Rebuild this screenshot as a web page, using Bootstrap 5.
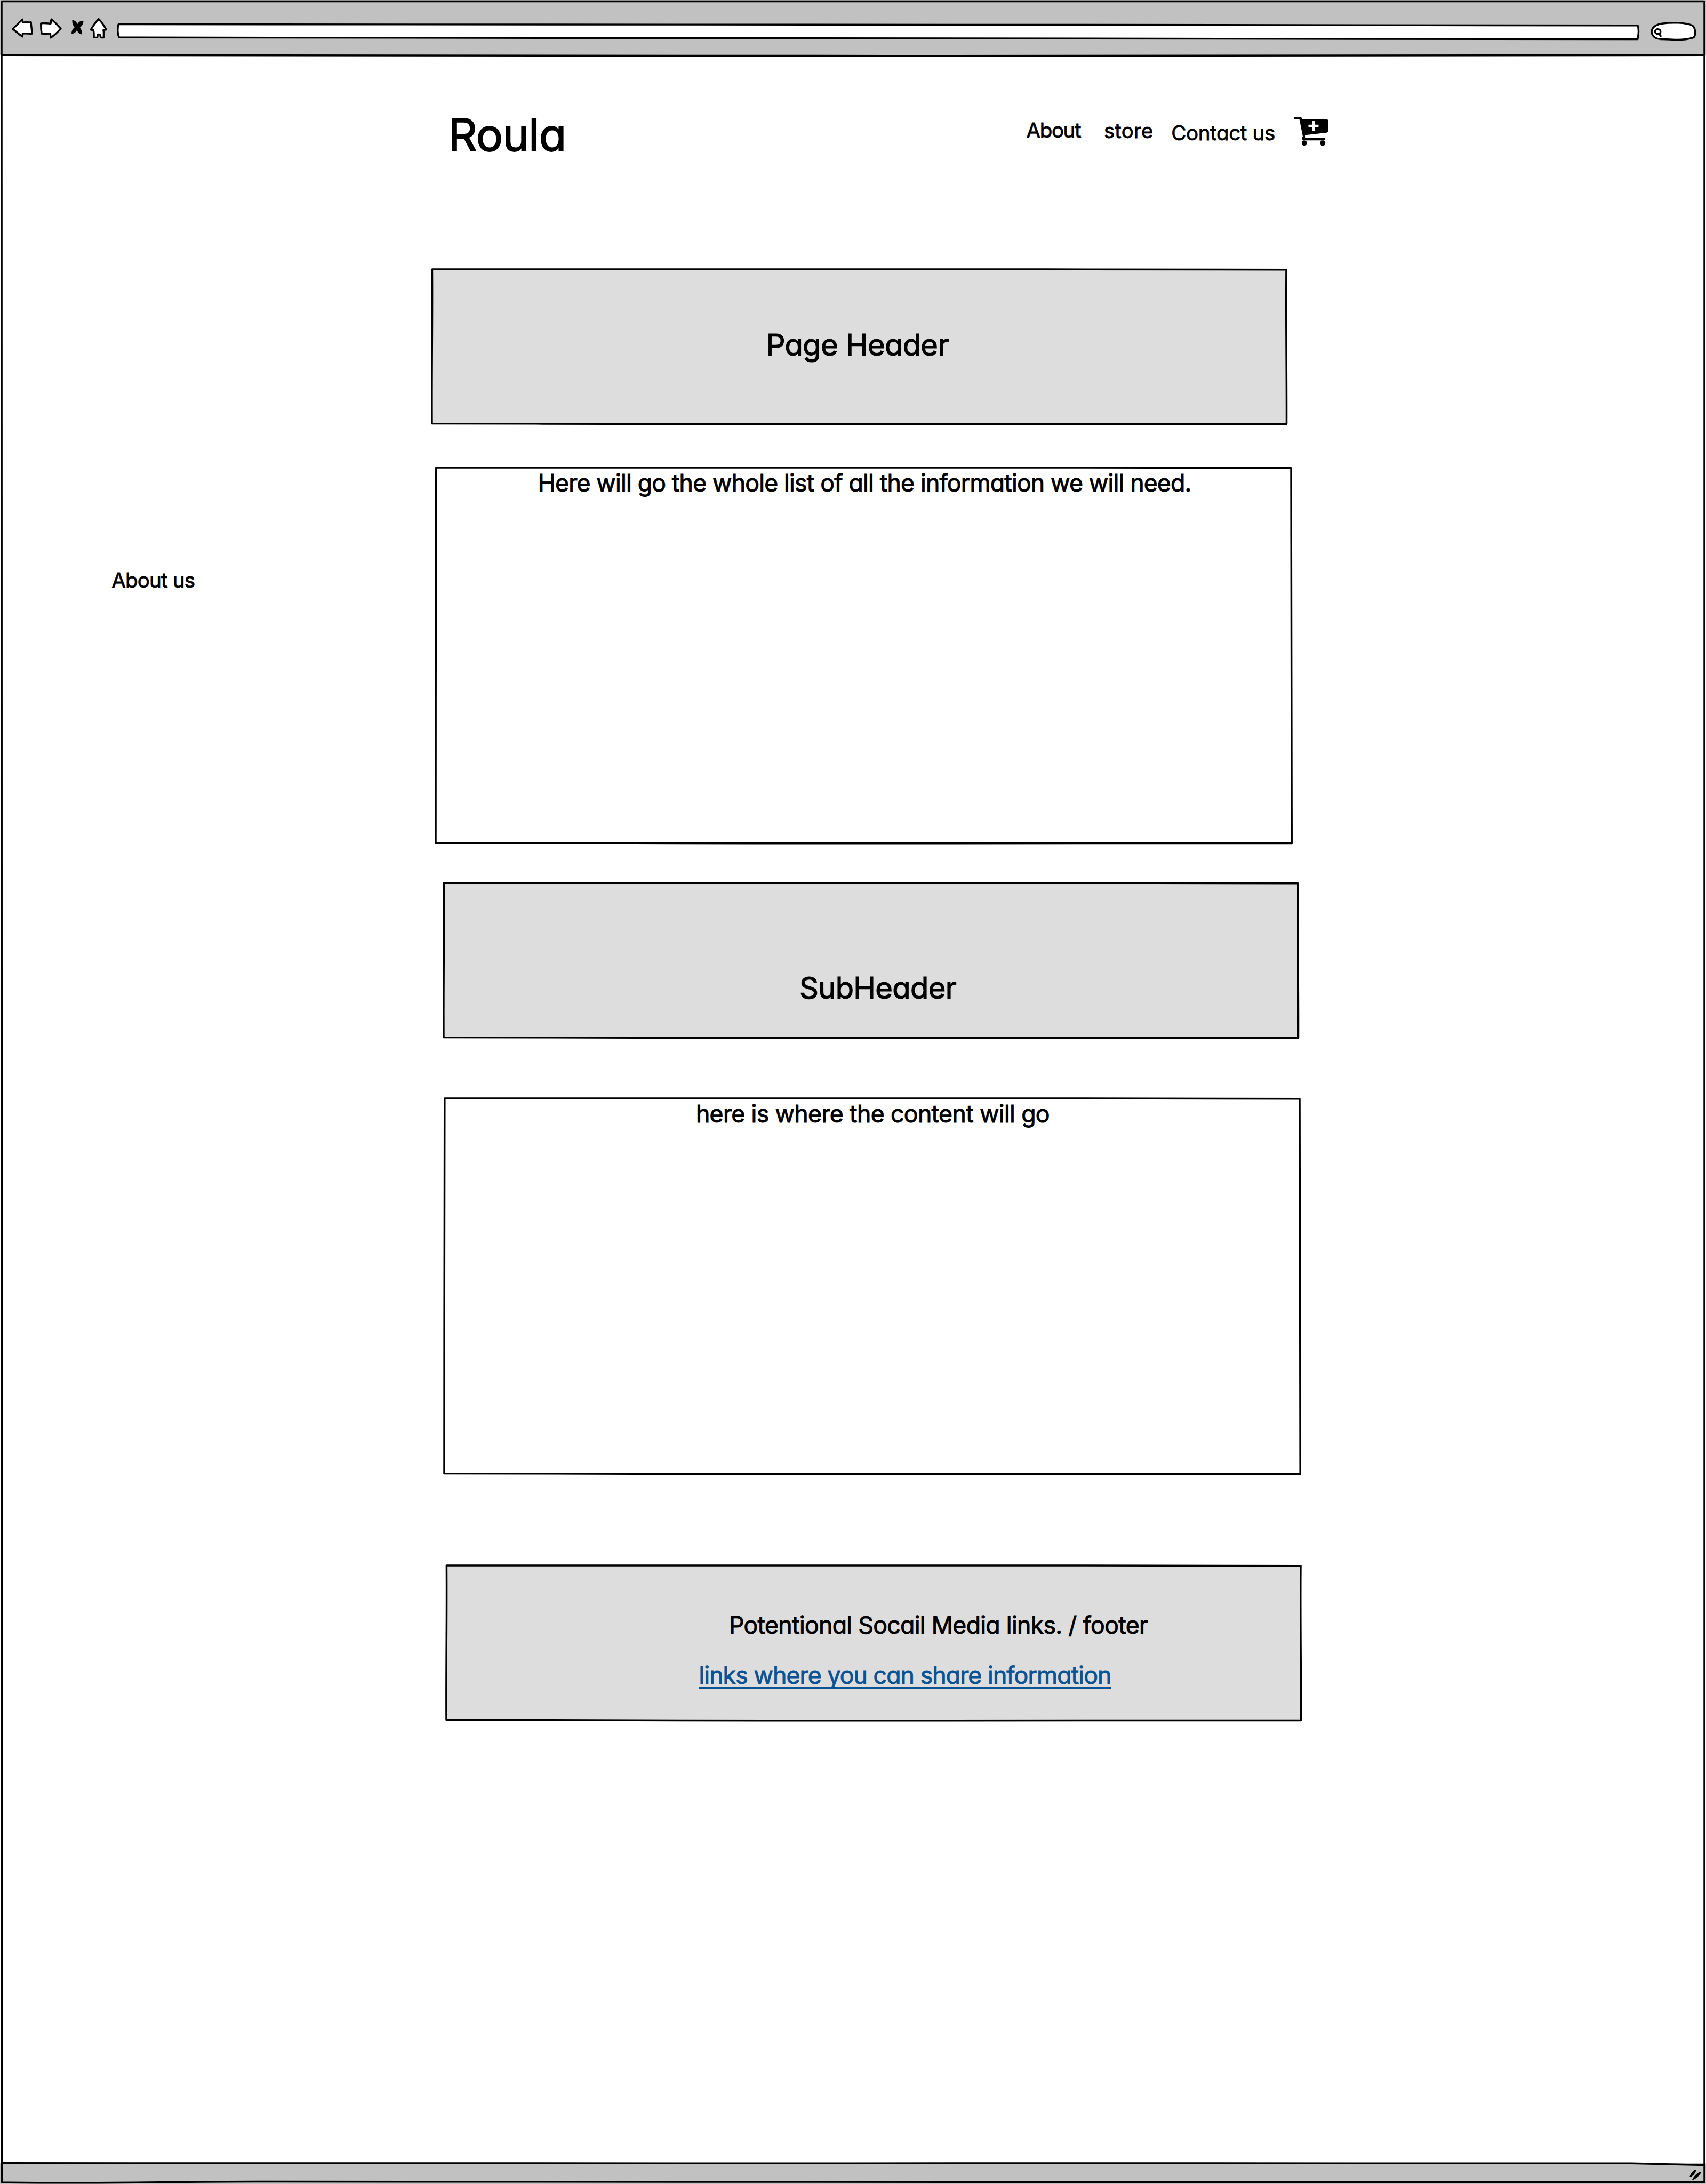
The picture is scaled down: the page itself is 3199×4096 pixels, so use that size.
<!DOCTYPE html>
<html lang="en">
<head>
<meta charset="utf-8">
<title>Roula</title>
<link href="https://cdn.jsdelivr.net/npm/bootstrap@5.3.0/dist/css/bootstrap.min.css" rel="stylesheet">
<style>
  body { width: 3199px; height: 4096px; overflow: hidden; background: #fff; color: #000;
    font-family: Inter, "Open Sans", sans-serif; font-weight: 400; font-feature-settings: "cv11";
    line-height: 1; white-space: nowrap; }
  .brand, .t-small, .t-body, .t-head { -webkit-text-stroke: .022em currentColor; }
  svg { display: block; overflow: visible; }
  .ink { fill: none; stroke: #000; stroke-width: 3.5; stroke-linejoin: round; stroke-linecap: round; }
  .chrome-bar { height: 104px; background: #c1c1c1; padding: 28.5px 0 0 20.2px; }
  .chrome-bar .ink { stroke-width: 14.5; fill: #fff; }
  .chrome-bar svg { height: 47.48px; flex: none; }
  .ic-arrow-l { width: 43.9px; }
  .ic-arrow-r { width: 46.3px; margin-left: 8.3px; }
  .ic-close { width: 27.3px; margin-left: 13px; }
  .ic-home { width: 35.6px; margin-left: 8.3px; }
  .address { width: 2859.6px; margin-left: 14.2px; }
  .finder { width: 89px; margin-left: 17.8px; }
  .status-bar { height: 39px; background: #c1c1c1; }
  .frame { width: 3199px; height: 4096px; left: 0; top: 0; pointer-events: none; }
  .side { width: 800px; padding: 965.2px 0 0 209.2px; letter-spacing: -.81px; }
  .masthead { height: 400.9px; padding-left: 40.8px; }
  .brand { font-size: 84px; padding-top: 106.8px; width: 1083.800px; letter-spacing: -.8px; }
  .t-small { font-size: 38.5px; }
  .t-body { font-size: 44.6px; }
  .t-head { font-size: 56px; letter-spacing: -.63px; }
  .nav-about { width: 145.3px; padding-top: 121px; letter-spacing: -1.42px; }
  .nav-store { width: 126.3px; padding-top: 122.4px; letter-spacing: .1px; }
  .nav-contact { width: 229.7px; padding-top: 126.1px; letter-spacing: -.36px; }
  .cart { width: 64.3px; height: 54.4px; margin-top: 115.2px; }
  .sketch { position: relative; z-index: 0; width: 1602.5px; }
  .sketch > svg { position: absolute; left: 0; top: 0; z-index: -1; }
  .banner { height: 290.2px; }
  .panel { width: 1605.3px; height: 704.2px; }
  .filled { fill: #ddd; }
  .b1 { margin-left: 9.7px; padding: 114px 0 0 627px; }
  .b2 { margin-left: 17.2px; margin-top: 81.8px; padding: 6.9px 0 0 191.5px; letter-spacing: -.82px; }
  .b3 { margin-left: 32.4px; margin-top: 74.9px; padding: 169px 0 0 666.5px; }
  .b4 { margin-left: 32.6px; margin-top: 114.3px; padding: 6.3px 0 0 472.3px; letter-spacing: -.65px; }
  .b5 { margin-left: 37.4px; margin-top: 171.5px; padding: 89.6px 0 0 473px; }
  .foot-note { padding-left: 56.6px; letter-spacing: -.69px; }
  .share { display: inline-block; margin-top: 49.4px; height: 47px; color: #085394; border-bottom: 3px solid #085394;
    text-decoration: none; letter-spacing: -.91px; }
</style>
<script src="https://cdn.jsdelivr.net/npm/bootstrap@5.3.0/dist/js/bootstrap.bundle.min.js"></script>
</head>
<body class="d-flex flex-column position-relative">
<svg width="0" height="0" class="position-absolute">
  <defs>
    <path id="banner-box" d="M0.4 0C400 -1 800 -1.2 1150 0C1320 .5 1480 .8 1602 .8C1601 90 1602.800 190 1602.500 290.400C1200 290 900 291.300 600 290.800C380 290.600 200 289.600 0 289.600C-.6 190 1.200 90 .4 0Z"/>
    <path id="panel-box" d="M.8 0C400 -1 800 -1.200 1150 0C1320 .5 1480 .8 1604 .8C1606 230 1604 470 1605.200 704.400C1200 704 900 705.500 600 704.800C380 704.600 200 703.600 0 703.600C-.4 470 1 230 .8 0Z"/>
  </defs>
</svg>

<header class="chrome-bar d-flex">
  <svg class="ic-arrow-l" viewBox="85 120 185 200"><path class="ink" d="M102 227L178 151C181 160 177 166 181 176C200 171 224 176 246 174C246 204 254 234 253 264C230 265 204 260 180 264C177 272 182 279 178 287C155 272 127 247 102 227Z"/></svg>
  <svg class="ic-arrow-r" viewBox="305 120 195 200"><path class="ink" d="M325 184C345 175 376 186 402 184C407 173 402 162 408 151C433 170 459 199 482 225C459 249 432 277 403 296C398 286 403 274 398 264C376 262 355 268 331 264C326 238 324 211 325 184Z"/></svg>
  <svg class="ic-close" viewBox="555 120 115 200"><path d="M570 156C589 157 602 171 611 187C621 169 636 160 658 162C659 184 647 202 630 217C644 232 649 249 648 270C626 267 613 251 606 237C598 253 586 264 564 264C563 243 573 226 589 213C573 197 568 178 570 156Z"/></svg>
  <svg class="ic-home" viewBox="705 120 150 200"><path class="ink" d="M780 147C804 171 824 201 840 232C834 236 826 232 818 236C824 256 818 275 821 294C814 296 804 295 797 294C792 286 798 276 790 271C784 269 776 269 773 273C770 280 775 288 770 294C762 294 753 295 744 294C742 275 745 254 739 236C733 234 726 235 719 232C736 203 758 174 780 147Z"/></svg>
  <svg class="address" viewBox="915 120 12045 200"><path class="ink" d="M935 190C4000 190 9000 193 12938 199C12950 236 12945 270 12937 308C9000 304 4000 294 940 294C925 262 927 225 935 190Z"/></svg>
  <svg class="finder" viewBox="13035 120 375 200"><g transform="translate(12720 0)"><path class="ink" d="M400 306C356 306 328 281 328 249C329 212 365 191 410 184C480 174 600 174 650 200C667 213 672 240 672 262C671 280 664 292 655 296C620 305 590 312 542 312C480 312 450 306 395 308"/><path class="ink" d="M388 264C370 270 357 264 355 249C354 235 365 229 375 228C390 228 400 236 398 250C397 260 392 264 388 266L400 283"/></g></svg>
</header>

<main class="d-flex flex-grow-1">
  <aside class="side t-small">About us</aside>
  <div class="d-flex flex-column">
    <nav class="masthead d-flex align-items-start">
      <div class="brand">Roula</div>
      <div class="nav-about t-small">About</div>
      <div class="nav-store t-small">store</div>
      <div class="nav-contact t-small">Contact us</div>
      <svg class="cart" viewBox="81 55 268 227" preserveAspectRatio="none"><path d="M91 55H133Q142 56 143 66L145 75H338Q349 75 349 86V167Q349 178 338 179L173 198V219H318Q328 221 328 230Q328 240 318 240H154Q143 239 143 229Q143 219 152 210L125 75H91Q81 74 81 65Q81 56 91 55Z"/><circle cx="163.500" cy="261" r="21"/><circle cx="307" cy="261" r="21"/><path d="M235 96V158M204 127H266" stroke="#fff" stroke-width="20" stroke-linecap="round"/></svg>
    </nav>
    <section class="sketch banner b1 t-head"><svg width="1" height="1"><use class="ink filled" href="#banner-box"/></svg>Page Header</section>
    <section class="sketch panel b2 t-body"><svg width="1" height="1"><use class="ink" href="#panel-box"/></svg>Here will go the whole list of all the information we will need.</section>
    <section class="sketch banner b3 t-head"><svg width="1" height="1"><use class="ink filled" href="#banner-box"/></svg>SubHeader</section>
    <section class="sketch panel b4 t-body"><svg width="1" height="1"><use class="ink" href="#panel-box"/></svg>here is where the content will go</section>
    <footer class="sketch banner b5 t-body"><svg width="1" height="1"><use class="ink filled" href="#banner-box"/></svg>
      <div class="foot-note">Potentional Socail Media links. / footer</div>
      <a class="share" href="#">links where you can share information</a>
    </footer>
  </div>
</main>

<div class="status-bar"></div>

<svg class="frame position-absolute" viewBox="0 0 3199 4096">
  <path class="ink" d="M3 2.500H3196V4092.500C2400 4091 1200 4094 500 4091.500C330 4091 180 4096 3.500 4093Z"/>
  <path class="ink" d="M3 103.300C500 105.500 2500 105 3196 103.300"/>
  <path class="ink" d="M3 4056.800C180 4059 900 4057 1600 4057.300C2200 4056.500 2900 4056 3060 4057.300L3196 4060.500"/>
  <path d="M3168.300 4082C3171 4075 3176 4069 3180.500 4069.300C3180 4075 3174 4082 3169 4083.300ZM3173 4088C3177 4080 3184 4073 3190.500 4073C3188 4079 3181 4086 3174 4088.600Z"/>
</svg>
</body>
</html>
